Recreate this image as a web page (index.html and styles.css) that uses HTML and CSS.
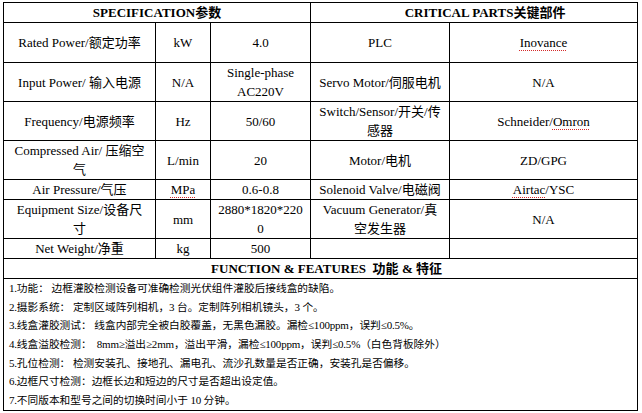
FILE: index.html
```html
<!DOCTYPE html>
<html>
<head>
<meta charset="utf-8">
<link rel="stylesheet" href="styles.css">
</head>
<body>
<table class="spec">
  <colgroup>
    <col class="c1"><col class="c2"><col class="c3"><col class="c4"><col class="c5">
  </colgroup>
  <tr class="h20">
    <th colspan="3" class="head">SPECIFICATION<span class="cjk-b">参数</span></th>
    <th colspan="2" class="head head-r">CRITICAL PARTS<span class="cjk-b">关键部件</span></th>
  </tr>
  <tr class="h40">
    <td>Rated Power/<span class="cjk">额定功率</span></td>
    <td>kW</td>
    <td>4.0</td>
    <td>PLC</td>
    <td><span class="sp">Inovance</span></td>
  </tr>
  <tr class="h39">
    <td>Input Power/ <span class="cjk">输入电源</span></td>
    <td>N/A</td>
    <td>Single-phase<br>AC220V</td>
    <td>Servo Motor/<span class="cjk">伺服电机</span></td>
    <td>N/A</td>
  </tr>
  <tr class="h39">
    <td>Frequency/<span class="cjk">电源频率</span></td>
    <td>Hz</td>
    <td>50/60</td>
    <td>Switch/Sensor/<span class="cjk">开关</span>/<span class="cjk">传</span><br><span class="cjk">感器</span></td>
    <td>Schneider/<span class="sp">Omron</span></td>
  </tr>
  <tr class="h39">
    <td>Compressed Air/ <span class="cjk">压缩空</span><br><span class="cjk">气</span></td>
    <td>L/min</td>
    <td>20</td>
    <td>Motor/<span class="cjk">电机</span></td>
    <td>ZD/GPG</td>
  </tr>
  <tr class="h20">
    <td>Air Pressure/<span class="cjk">气压</span></td>
    <td><span class="sp">MPa</span></td>
    <td>0.6-0.8</td>
    <td>Solenoid Valve/<span class="cjk">电磁阀</span></td>
    <td><span class="sp">Airtac</span>/YSC</td>
  </tr>
  <tr class="h39">
    <td>Equipment Size/<span class="cjk">设备尺</span><br><span class="cjk">寸</span></td>
    <td>mm</td>
    <td>2880*1820*220<br>0</td>
    <td>Vacuum Generator/<span class="cjk">真</span><br><span class="cjk">空发生器</span></td>
    <td>N/A</td>
  </tr>
  <tr class="h20">
    <td>Net Weight/<span class="cjk">净重</span></td>
    <td>kg</td>
    <td>500</td>
    <td></td>
    <td></td>
  </tr>
  <tr class="h20">
    <th colspan="5" class="head head-f">FUNCTION &amp; FEATURES&nbsp; <span class="cjk-b">功能</span> &amp; <span class="cjk-b">特征</span></th>
  </tr>
  <tr class="h131">
    <td colspan="5" class="features">
      <div class="line">1.<span class="cjk">功能：</span> <span class="cjk">边框灌胶检测设备可准确检测光伏组件灌胶后接线盒的缺陷。</span></div>
      <div class="line">2.<span class="cjk">摄影系统：</span> <span class="cjk">定制区域阵列相机，</span>3 <span class="cjk">台。定制阵列相机镜头，</span>3 <span class="cjk">个。</span></div>
      <div class="line">3.<span class="cjk">线盒灌胶测试：</span> <span class="cjk">线盒内部完全被白胶覆盖，无黑色漏胶。漏检</span>≤100ppm<span class="cjk">，误判</span>≤0.5%<span class="cjk">。</span></div>
      <div class="line">4.<span class="cjk">线盒溢胶检测：</span>  8mm≥<span class="cjk">溢出</span>≥2mm<span class="cjk">，溢出平滑，漏检</span>≤100ppm<span class="cjk">，误判</span>≤0.5%<span class="cjk">（白色背板除外）</span></div>
      <div class="line">5.<span class="cjk">孔位检测：</span> <span class="cjk">检测安装孔、接地孔、漏电孔、流沙孔数量是否正确，安装孔是否偏移。</span></div>
      <div class="line">6.<span class="cjk">边框尺寸检测：边框长边和短边的尺寸是否超出设定值。</span></div>
      <div class="line">7.<span class="cjk">不同版本和型号之间的切换时间小于</span> 10 <span class="cjk">分钟。</span></div>
    </td>
  </tr>
</table>
</body>
</html>
```

FILE: styles.css
```css
html, body {
  background: #ffffff;
}
body {
  margin: 2px 0 0 3px;
  font-family: "Liberation Serif", "Noto Sans CJK SC", serif;
  color: #000;
}
.spec {
  border-collapse: collapse;
  table-layout: fixed;
  width: 634px;
  font-size: 13px;
}
.c1 { width: 152px; }
.c2 { width: 55px; }
.c3 { width: 100px; }
.c4 { width: 139px; }
.c5 { width: 188px; }
.spec td, .spec th {
  border: 1px solid #000;
  padding: 0 4px;
  text-align: center;
  vertical-align: middle;
  line-height: 19px;
  white-space: nowrap;
  overflow: hidden;
}
.h20 { height: 20px; }
.h39 { height: 39px; }
.h40 { height: 40px; }
.h131 { height: 131px; }
.spec th.head {
  font-weight: bold;
  line-height: 18px;
}
.spec th.head-r { padding-left: 26px; }
.spec th.head-f { padding-left: 16px; }
.cjk {
  font-family: "Noto Sans CJK SC", sans-serif;
  font-weight: 400;
  line-height: 1;
}
.cjk-b {
  font-family: "Noto Sans CJK SC", sans-serif;
  font-weight: 700;
  line-height: 1;
}
.sp {
  text-decoration: underline dotted #d42a2a;
  text-decoration-thickness: 1px;
  text-underline-offset: 3px;
}
.spec td.features {
  text-align: left;
  vertical-align: top;
  padding: 0 5px;
  font-size: 11px;
  letter-spacing: -0.2px;
  line-height: 18.7px;
}
.features .line {
  line-height: 18.7px;
  height: 18.7px;
  white-space: pre;
}
.features .cjk {
  font-size: 10.7px;
  letter-spacing: 0;
  line-height: 1;
}
```
